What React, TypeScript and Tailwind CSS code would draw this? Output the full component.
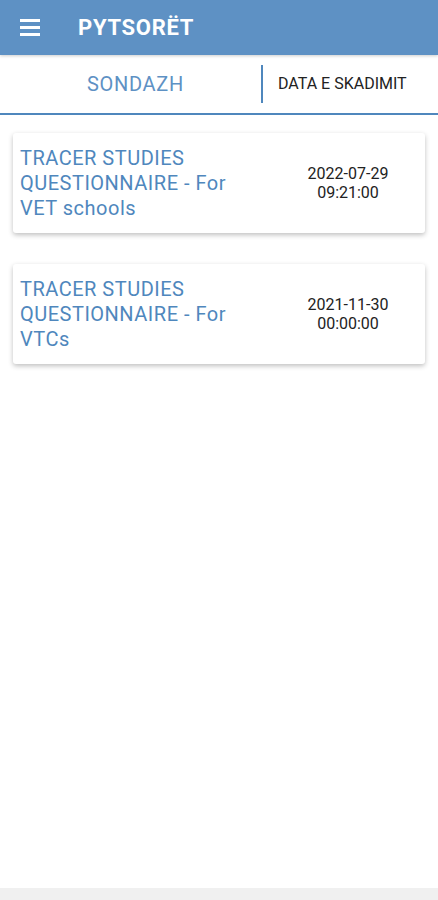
const surveys = [
  { title: "TRACER STUDIES QUESTIONNAIRE - For VET schools", date: "2022-07-29", time: "09:21:00" },
  { title: "TRACER STUDIES QUESTIONNAIRE - For VTCs", date: "2021-11-30", time: "00:00:00" },
];

const SurveyCard = ({ title, date, time }: { title: string; date: string; time: string }) => {
  return (
    <div className="mx-[13px] h-[100px] flex items-center bg-white rounded-[3px] shadow-[0_2px_5px_rgba(0,0,0,0.25)]">
      <div className="w-[230px] pl-[7px] text-[20px] leading-[25px] tracking-[0.5px] text-[#4f87bd]">{title}</div>
      <div className="flex-1" />
      <div className="w-[154px] text-center text-[16px] leading-[19px] text-[#222]">
        <div>{date}</div>
        <div>{time}</div>
      </div>
    </div>
  );
};

export default function App() {
  return (
    <div className="min-h-[900px] flex flex-col bg-white font-['Roboto',sans-serif]">
      <div className="h-[55px] bg-[#5e91c4] flex items-center shadow-[0_1px_3px_rgba(0,0,0,0.2)]">
        <div className="ml-[20px] w-[20px] flex flex-col gap-[4.5px]">
          <span className="block h-[2.5px] bg-white" />
          <span className="block h-[2.5px] bg-white" />
          <span className="block h-[2.5px] bg-white" />
        </div>
        <div className="ml-[38px] text-white text-[22px] font-bold tracking-[0.7px]">PYTSORËT</div>
      </div>
      <div className="h-[60px] flex items-center border-b-2 border-[#4f87bd]">
        <div className="w-[261px] flex justify-center pl-[10px] text-[20px] tracking-[0.7px] text-[#5e91c4]">SONDAZH</div>
        <div className="w-[2px] h-[38px] bg-[#4f87bd]" />
        <div className="pl-[15px] text-[16px] text-[#222]">DATA E SKADIMIT</div>
      </div>
      <div className="flex-1 flex flex-col gap-[31px] pt-[18px]">
        {surveys.map((s) => (
          <SurveyCard key={s.date} {...s} />
        ))}
      </div>
      <div className="h-[12px] bg-[#f0f0f0]" />
    </div>
  );
}
